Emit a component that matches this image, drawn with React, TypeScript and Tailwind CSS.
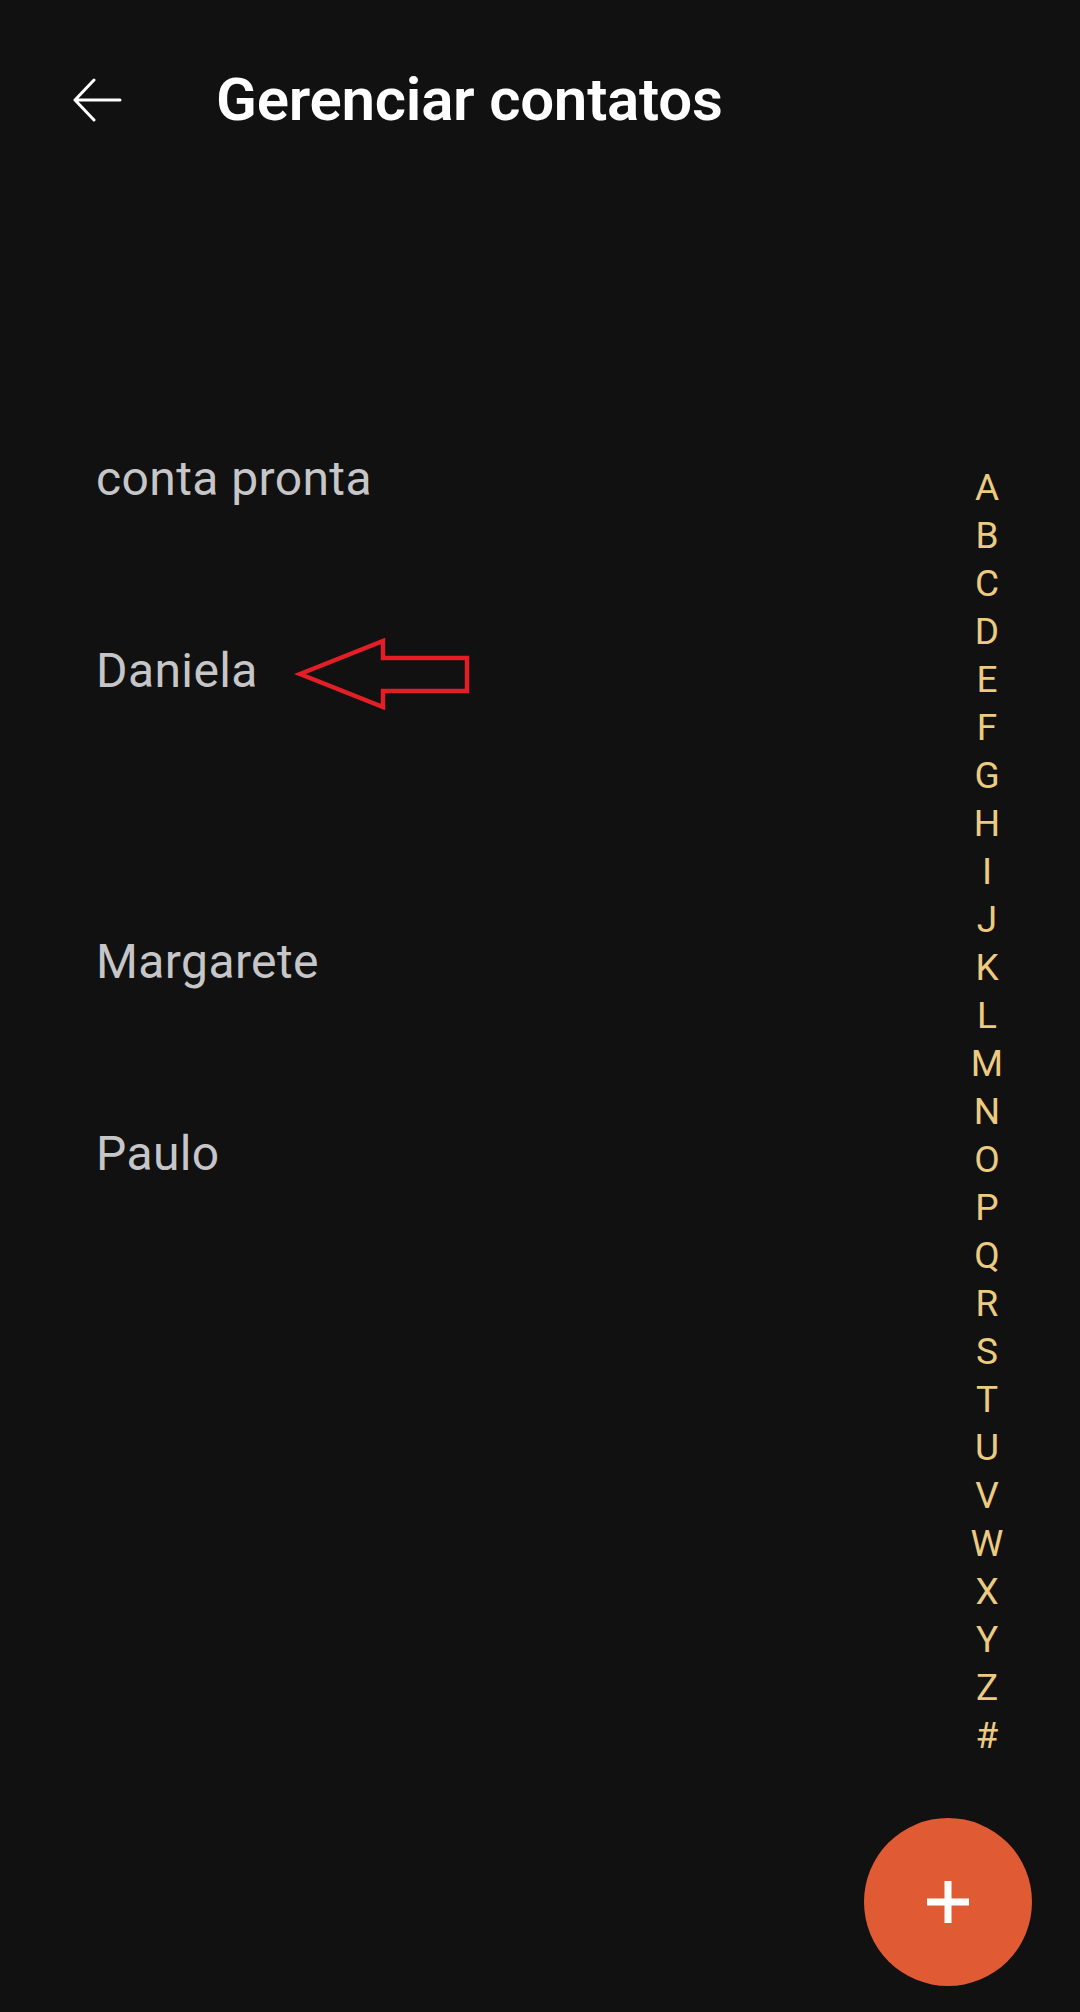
const LETTERS = "ABCDEFGHIJKLMNOPQRSTUVWXYZ#".split("");

const FONT = "font-['Roboto','Liberation_Sans',sans-serif]";

function BackArrow() {
  return (
    <svg width="50" height="44" viewBox="0 0 50 44" fill="none" className="block">
      <path d="M22 2 L3 22 L22 42 M3 22 H48" stroke="#ffffff" strokeWidth="3" strokeLinecap="round" strokeLinejoin="round" />
    </svg>
  );
}

function RedArrow() {
  return (
    <svg width="176" height="72" viewBox="0 0 176 72" fill="none" className="block">
      <path d="M6 36 L89 3 L89 20 L173 20 L173 53 L89 53 L89 69 Z" stroke="#e41e26" strokeWidth="4.5" strokeLinejoin="miter" />
    </svg>
  );
}

export default function App() {
  return (
    <div className={`relative h-[2012px] w-[1080px] overflow-hidden bg-[#111112] ${FONT}`}>
      <header className="flex h-[200px] items-center pl-[72px]">
        <BackArrow />
        <h1 className="ml-[94px] text-[60px] font-semibold leading-none tracking-[-0.25px] text-white">Gerenciar contatos</h1>
      </header>

      <div className="flex">
        <ul className="flex-1 pl-[96px] pt-[249px] text-[48px] leading-[60px] tracking-[0.4px] text-[#c6c6c8]">
          <li className="h-[192px]">conta pronta</li>
          <li className="flex h-[291px] items-start gap-[36px]">
            <span>Daniela</span>
            <span className="-mt-[3px]"><RedArrow /></span>
          </li>
          <li className="h-[192px]">Margarete</li>
          <li>Paulo</li>
        </ul>

        <ol className="mr-[73px] w-[40px] pt-[264px] text-center text-[37px] leading-[48px] text-[#eccb80]">
          {LETTERS.map((l) => (
            <li key={l}>{l}</li>
          ))}
        </ol>
      </div>

      <button className="absolute left-[864px] top-[1818px] flex h-[168px] w-[168px] items-center justify-center rounded-full bg-[#e05a33]">
        <svg width="42" height="42" viewBox="0 0 42 42" className="block">
          <path d="M21 0 V42 M0 21 H42" stroke="#ffffff" strokeWidth="7" />
        </svg>
      </button>
    </div>
  );
}
